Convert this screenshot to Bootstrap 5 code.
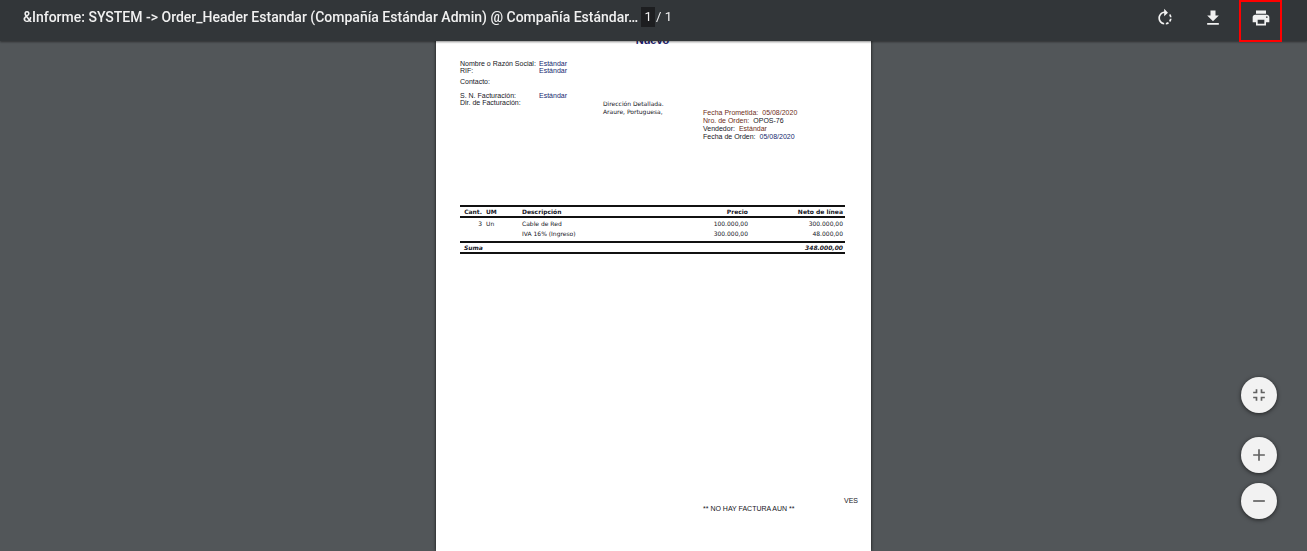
<!DOCTYPE html>
<html lang="es">
<head>
<meta charset="utf-8">
<meta name="viewport" content="width=device-width, initial-scale=1">
<title>Informe</title>
<link rel="stylesheet" href="https://cdn.jsdelivr.net/npm/bootstrap@5.3.0/dist/css/bootstrap.min.css">
<style>
body{background:#525659;font-family:Roboto,sans-serif}
.viewer{height:100vh}
.toolbar{background:#323639;color:#f1f1f1;box-shadow:0 1px 2px rgba(0,0,0,.45);height:41px;padding:0 25px 0 23px;font-size:14px;line-height:20px}
.title-row{padding-top:7px}
.doc-title{font-weight:500;font-size:14px;line-height:20px;margin:0}
.page-no{width:14px;height:20px;margin-left:3px;padding:0;border:0;background:#1d1e20;color:#f1f1f1;text-align:center;font-size:13px}
.page-total{font-size:13px;padding-left:1px}
.tools{gap:5px}
.tool{width:43px;height:42px;padding:0 0 6px;border:2px solid transparent;background:none;color:#f1f1f1;line-height:0}
.tool.marked{border-color:#f00}
.sheet{width:435px;min-height:100vh;padding:34px 26px 0 24px;background:#fff;box-shadow:0 0 3px rgba(0,0,0,.8);font:7px/8px "Liberation Sans",Arial,sans-serif;color:#16161e}
.state{font-size:11px;line-height:12px;font-weight:700;color:#1c1c70;margin:0 0 14px}
.wide{font-family:"DejaVu Sans",sans-serif;font-size:6px}
.client{width:143px;line-height:7px}
.client dt{width:79px;font-weight:400}
.client dd,.order dd{margin:0;color:#14286e}
.client .bill{padding-top:7px}
.address{width:100px;padding-top:40px}
.order{padding-top:49px;margin:0}
.order dt{font-weight:400}
.order .warm{color:#6e2d20}
.order .plain{color:#16161e}
.upper{height:145px}
.items{width:100%;table-layout:fixed;font-size:6px;line-height:9px}
.items th,.items td{padding:0}
.items thead tr,.items tfoot tr{border-top:2px solid #111;border-bottom:2px solid #111}
.items tbody td{height:11px}
.items tbody tr:last-child td{padding-bottom:3px;height:14px}
.items .qty{width:22px}
.items .unit{width:40px;padding-left:4px}
.items .price{width:82px}
.items .net{width:97px;padding-right:2px}
.foot{padding-top:243px;margin-right:-13px}
.note{padding-left:243px}
.fab-stack{position:fixed;right:30px;bottom:32px}
.fab{width:36px;height:36px;padding:0;border:0;border-radius:50%;background:#f2f2f2;color:#616161;box-shadow:0 1px 4px rgba(0,0,0,.6);line-height:0}
.zoom-pair{gap:10px}
</style>
</head>
<body>
<div class="viewer overflow-hidden">
<header class="toolbar fixed-top d-flex align-items-start">
  <div class="title-row d-flex align-items-center flex-grow-1 text-nowrap">
    <h1 class="doc-title">&amp;Informe: SYSTEM -&gt; Order_Header Estandar (Compañía Estándar Admin) @ Compañía Estándar…</h1>
    <input class="page-no" value="1" aria-label="Página">
    <span class="page-total">/ 1</span>
  </div>
  <div class="tools d-flex">
    <button class="tool" aria-label="Girar"><svg width="20" height="20" viewBox="0 0 24 24" fill="currentColor"><path d="M15.55 5.55 11 1v3.07C7.06 4.56 4 7.92 4 12s3.05 7.44 7 7.93v-2.02c-2.84-.48-5-2.94-5-5.91s2.16-5.43 5-5.91V10l4.55-4.45zM19.93 11a7.906 7.906 0 0 0-1.62-3.89l-1.42 1.42c.54.75.88 1.6 1.02 2.47h2.02zM13 17.9v2.02c1.39-.17 2.74-.71 3.9-1.61l-1.44-1.44c-.75.54-1.59.89-2.46 1.03zm3.89-2.42 1.42 1.41c.9-1.16 1.45-2.5 1.62-3.89h-2.02c-.14.87-.48 1.72-1.02 2.48z"/></svg></button>
    <button class="tool" aria-label="Descargar"><svg width="20" height="20" viewBox="0 0 24 24" fill="currentColor"><path d="M19 9h-4V3H9v6H5l7 7 7-7zM5 18v2h14v-2H5z"/></svg></button>
    <button class="tool marked" aria-label="Imprimir"><svg width="20" height="20" viewBox="0 0 24 24" fill="currentColor"><path d="M19 8H5c-1.66 0-3 1.34-3 3v6h4v4h12v-4h4v-6c0-1.66-1.34-3-3-3zm-3 11H8v-5h8v5zm3-7c-.55 0-1-.45-1-1s.45-1 1-1 1 .45 1 1-.45 1-1 1zm-1-9H6v4h12V3z"/></svg></button>
  </div>
</header>

<main class="sheet mx-auto">
  <h2 class="state text-center">Nuevo</h2>
  <div class="upper d-flex text-nowrap">
    <dl class="client m-0">
      <div class="d-flex"><dt>Nombre o Razón Social:</dt><dd>Estándar</dd></div>
      <div class="d-flex"><dt>RIF:</dt><dd>Estándar</dd></div>
      <div class="d-flex mt-1"><dt>Contacto:</dt></div>
      <div class="bill d-flex"><dt>S. N. Facturación:</dt><dd>Estándar</dd></div>
      <div class="d-flex"><dt>Dir. de Facturación:</dt></div>
    </dl>
    <address class="address wide mb-0">Dirección Detallada.<br>Araure, Portuguesa,</address>
    <dl class="order">
      <div class="d-flex gap-1"><dt class="warm">Fecha Prometida:</dt><dd class="warm">05/08/2020</dd></div>
      <div class="d-flex gap-1"><dt class="warm">Nro. de Orden:</dt><dd class="plain">OPOS-76</dd></div>
      <div class="d-flex gap-1"><dt>Vendedor:</dt><dd class="warm">Estándar</dd></div>
      <div class="d-flex gap-1"><dt>Fecha de Orden:</dt><dd>05/08/2020</dd></div>
    </dl>
  </div>
  <table class="items wide">
    <thead><tr><th class="qty text-end">Cant.</th><th class="unit">UM</th><th>Descripción</th><th class="price text-end">Precio</th><th class="net text-end">Neto de línea</th></tr></thead>
    <tbody>
      <tr><td class="text-end">3</td><td class="unit">Un</td><td>Cable de Red</td><td class="text-end">100.000,00</td><td class="net text-end">300.000,00</td></tr>
      <tr><td></td><td></td><td>IVA 16% (Ingreso)</td><td class="text-end">300.000,00</td><td class="net text-end">48.000,00</td></tr>
    </tbody>
    <tfoot><tr class="fst-italic fw-bold"><td colspan="4" class="ps-1">Suma</td><td class="net text-end">348.000,00</td></tr></tfoot>
  </table>
  <div class="foot">
    <div class="text-end">VES</div>
    <div class="note">** NO HAY FACTURA AUN **</div>
  </div>
</main>

<div class="fab-stack d-flex flex-column gap-4">
  <button class="fab" aria-label="Ajustar a la página"><svg width="20" height="20" viewBox="0 0 24 24" fill="currentColor"><path d="M5 16h3v3h2v-5H5v2zm3-8H5v2h5V5H8v3zm6 11h2v-3h3v-2h-5v5zm2-11V5h-2v5h5V8h-3z"/></svg></button>
  <div class="zoom-pair d-flex flex-column">
    <button class="fab" aria-label="Acercar"><svg width="20" height="20" viewBox="0 0 24 24" fill="currentColor"><path d="M19 13h-6v6h-2v-6H5v-2h6V5h2v6h6v2z"/></svg></button>
    <button class="fab" aria-label="Alejar"><svg width="20" height="20" viewBox="0 0 24 24" fill="currentColor"><path d="M19 13H5v-2h14v2z"/></svg></button>
  </div>
</div>
</div>
<script src="https://cdn.jsdelivr.net/npm/bootstrap@5.3.0/dist/js/bootstrap.bundle.min.js"></script>
</body>
</html>
